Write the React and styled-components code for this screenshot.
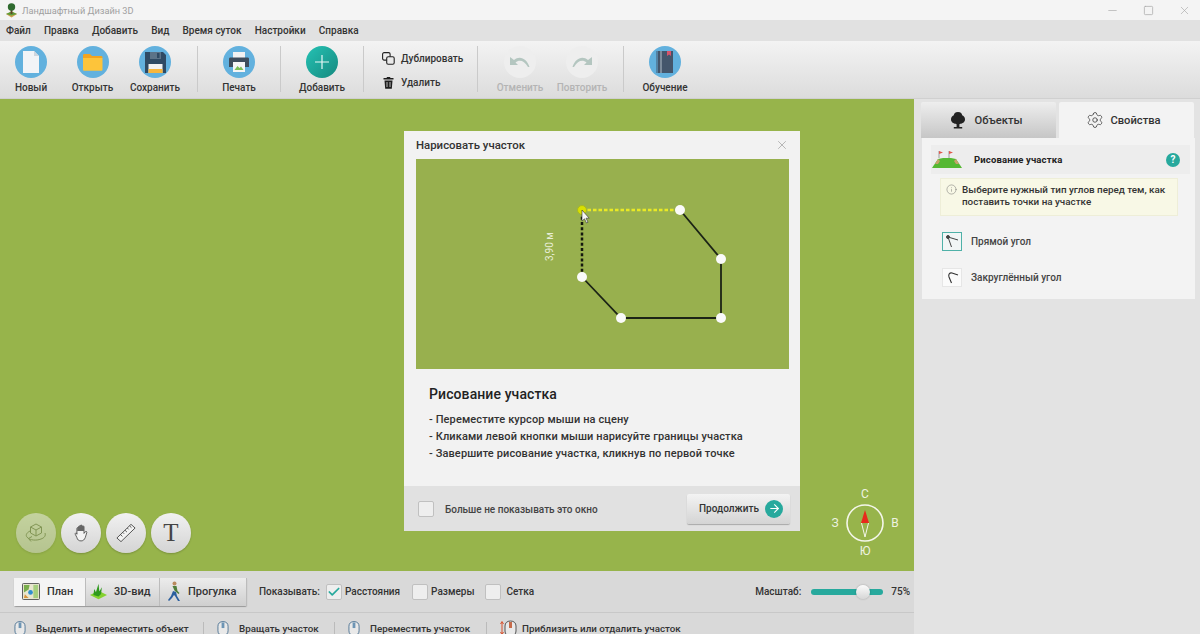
import styled, { createGlobalStyle } from "styled-components";
import { ArrowRight, Check, Info, Minus, Settings, Square, X } from "lucide-react";

const GlobalStyle = createGlobalStyle`
  html, body {
    margin: 0;
    height: 100%;
    overflow: hidden;
    font-family: Roboto, "Liberation Sans", sans-serif;
    color: #2b2b2b;
  }
  * { box-sizing: border-box; }
`;

const Page = styled.div`
  display: flex;
  flex-direction: column;
  width: 1200px;
  height: 634px;
  overflow: hidden;
  background: #e3e3e3;
`;

// title bar + menu
const TitleBar = styled.div`
  flex: none;
  height: 20px;
  display: flex;
  align-items: center;
  padding-left: 5px;
  background: #f4f4f4;
`;
const AppName = styled.span`
  margin-left: 4px;
  font-size: 9.2px;
  color: #a0a0a0;
`;
const WindowButtons = styled.div`
  margin-left: auto;
  display: flex;
  align-items: center;
  gap: 24px;
  padding-right: 9px;
  color: #a8a8a8;
`;
const MenuBar = styled.div`
  flex: none;
  height: 21px;
  display: flex;
  align-items: center;
  gap: 13.2px;
  padding-left: 6px;
  background: #e1e1e1;
  font-size: 10px;
  font-weight: 500;
  color: #333;
`;

// toolbar
const Toolbar = styled.div`
  flex: none;
  height: 58px;
  display: flex;
  align-items: flex-start;
  background: linear-gradient(#f3f3f3, #dcdcdc);
  border-bottom: 1px solid #d0d0d0;
`;
const ToolItem = styled.div`
  flex: none;
  width: ${(p) => p.$w}px;
  margin-left: ${(p) => p.$ml || 0}px;
  height: 57px;
  padding-top: 5px;
  display: flex;
  flex-direction: column;
  align-items: center;
  gap: 3px;
  font-size: 10px;
  font-weight: 500;
  color: ${(p) => (p.$off ? "#b4b4b4" : "#333")};
`;
const ToolCircle = styled.div`
  width: 32px;
  height: 32px;
  border-radius: 50%;
  display: flex;
  align-items: center;
  justify-content: center;
  background: ${(p) => p.$bg || "#62b1de"};
`;
const ToolLabel = styled.div`
  line-height: 14px;
`;
const ToolSep = styled.div`
  flex: none;
  width: 1px;
  height: 46px;
  margin: 5px 0 0 ${(p) => p.$ml || 0}px;
  background: #cacaca;
`;
const ToolStack = styled.div`
  flex: none;
  width: 113px;
  padding: 8px 0 0 18px;
  display: flex;
  flex-direction: column;
  gap: 6px;
`;
const StackRow = styled.div`
  display: flex;
  align-items: center;
  gap: 6px;
  height: 18px;
  font-size: 10px;
  font-weight: 500;
  color: #333;
`;

// main area
const Main = styled.div`
  flex: 1;
  min-height: 0;
  display: flex;
`;
const Workspace = styled.div`
  flex: none;
  width: 914px;
  display: flex;
  flex-direction: column;
`;
const Canvas = styled.div`
  position: relative;
  flex: 1;
  background: #97b44b;
`;
const CanvasTools = styled.div`
  position: absolute;
  left: 16px;
  bottom: 18px;
  display: flex;
  gap: 5px;
`;
const RoundTool = styled.div`
  width: 40px;
  height: 40px;
  border-radius: 50%;
  display: flex;
  align-items: center;
  justify-content: center;
  font: 25px "Liberation Serif", serif;
  color: #444;
  background: linear-gradient(#f1f1f1, #d4d4d4);
  box-shadow: 0 1px 2px rgba(0, 0, 0, 0.2);
  opacity: ${(p) => (p.$off ? 0.5 : 1)};
`;
const CompassSpot = styled.div`
  position: absolute;
  left: 825px;
  top: 386px;
`;

// dialog
const Dialog = styled.div`
  position: absolute;
  left: 404px;
  top: 32px;
  width: 396px;
  height: 400px;
  display: flex;
  flex-direction: column;
  background: #f2f2f2;
`;
const DialogHead = styled.div`
  flex: none;
  height: 28px;
  display: flex;
  align-items: center;
  justify-content: space-between;
  padding: 0 11px 0 12px;
  font-size: 11.4px;
  font-weight: 500;
  color: #333;
`;
const Preview = styled.div`
  flex: none;
  height: 210px;
  margin: 0 11px 0 12px;
  background: #98b04e;
`;
const DialogBody = styled.div`
  flex: 1;
  padding: 17px 25px 0;
`;
const DialogTitle = styled.div`
  font-size: 14px;
  font-weight: 500;
  line-height: 17px;
  letter-spacing: 0.1px;
  color: #222;
  margin-bottom: 8px;
`;
const DialogLine = styled.div`
  font-size: 11px;
  font-weight: 500;
  line-height: 17.2px;
  letter-spacing: 0.11px;
  color: #333;
`;
const DialogFoot = styled.div`
  flex: none;
  height: 45px;
  display: flex;
  align-items: center;
  padding: 0 10px 0 14px;
  background: #e1e1e1;
`;
const FootText = styled.span`
  margin: 1px 0 0 11px;
  font-size: 10px;
  font-weight: 500;
  color: #444;
`;
const ContinueButton = styled.div`
  margin-left: auto;
  width: 103px;
  height: 30px;
  display: flex;
  align-items: center;
  justify-content: space-between;
  padding: 0 7px 0 12px;
  border-radius: 2px;
  background: linear-gradient(#f3f3f3, #d4d4d4);
  box-shadow: 0 1px 1px rgba(0, 0, 0, 0.25);
  font-size: 10px;
  font-weight: 500;
  color: #333;
`;
const TealDot = styled.div`
  width: ${(p) => p.$size}px;
  height: ${(p) => p.$size}px;
  border-radius: 50%;
  display: flex;
  align-items: center;
  justify-content: center;
  background: #27a99d;
  color: #fff;
  font-size: 10px;
  font-weight: 700;
`;
const CheckBox = styled.div`
  flex: none;
  width: 16px;
  height: 16px;
  border: 1px solid #c0c0c0;
  border-radius: 2px;
  background: #eeeeee;
  display: flex;
  align-items: center;
  justify-content: center;
`;

// bottom bars
const ViewBar = styled.div`
  flex: none;
  height: 42px;
  display: flex;
  align-items: center;
  padding-left: 14px;
  background: #d9d9d9;
  border-bottom: 1px solid #c8c8c8;
  font-size: 10px;
  font-weight: 500;
  color: #333;
`;
const Segments = styled.div`
  display: flex;
  height: 28px;
  border-radius: 2px;
  box-shadow: 0 1px 1px rgba(0, 0, 0, 0.3);
`;
const Segment = styled.div`
  width: ${(p) => p.$w}px;
  display: flex;
  align-items: center;
  gap: 7px;
  padding-left: ${(p) => p.$pl}px;
  font-size: 11px;
  background: ${(p) => (p.$on ? "#f4f4f4" : "linear-gradient(#ececec, #cfcfcf)")};
  border-right: 1px solid #bcbcbc;
`;
const ShowLabel = styled.span`
  margin: 0 6px 0 12px;
`;
const CheckLabel = styled.span`
  margin: 0 ${(p) => p.$mr}px 0 ${(p) => p.$ml}px;
`;
const ScaleLabel = styled.span`
  margin-left: ${(p) => p.$ml}px;
`;
const SliderTrack = styled.div`
  position: relative;
  width: 72px;
  height: 6px;
  margin: 0 8px 0 10px;
  border-radius: 3px;
  background: #27a99d;
`;
const SliderThumb = styled.div`
  position: absolute;
  left: 45px;
  top: -4px;
  width: 14px;
  height: 14px;
  border-radius: 50%;
  background: linear-gradient(#fbfbfb, #d6d6d6);
  box-shadow: 0 0 2px rgba(0, 0, 0, 0.3);
`;
const StatusBar = styled.div`
  flex: none;
  height: 21px;
  display: flex;
  align-items: flex-start;
  padding: 7px 0 0 14px;
  background: #d9d9d9;
  font-size: 9.8px;
  font-weight: 500;
  color: #333;
  overflow: hidden;
`;
const StatusItem = styled.div`
  flex: none;
  width: ${(p) => p.$w}px;
  display: flex;
  align-items: center;
  gap: ${(p) => p.$gap || 10}px;
  white-space: nowrap;
`;
const StatusSep = styled.div`
  flex: none;
  width: 1px;
  height: 13px;
  margin: 2px 13px 0 0;
  background: #bbb;
`;

// right panel
const Side = styled.div`
  flex: 1;
  padding: 3px 5px 0 7px;
  background: #e3e3e3;
`;
const Tabs = styled.div`
  display: flex;
  gap: 3px;
  height: 36px;
`;
const Tab = styled.div`
  width: 135px;
  display: flex;
  align-items: center;
  justify-content: center;
  gap: ${(p) => (p.$on ? 6 : 10)}px;
  padding-right: ${(p) => (p.$on ? 6 : 4)}px;
  border-radius: 2px 2px 0 0;
  font-size: 11.2px;
  font-weight: 500;
  color: #333;
  background: ${(p) => (p.$on ? "#f3f3f3" : "linear-gradient(#eeeeee, #c6c6c6)")};
`;
const Panel = styled.div`
  height: 161px;
  margin-left: 1px;
  padding: 7px 5px 0 9px;
  background: #f3f3f3;
`;
const PanelHead = styled.div`
  height: 29px;
  display: flex;
  align-items: center;
  justify-content: space-between;
  padding-right: 10px;
  background: #ededed;
  font-size: 9.5px;
  font-weight: 700;
  letter-spacing: 0.15px;
  color: #222;
`;
const HeadLeft = styled.div`
  display: flex;
  align-items: center;
  gap: 11px;
`;
const Notice = styled.div`
  display: flex;
  gap: 5px;
  width: 238px;
  height: 38px;
  margin: 4px 0 15px 9px;
  padding: 5px;
  background: #f8f8e6;
  border: 1px solid #eeeed8;
  font-size: 9.85px;
  font-weight: 500;
  line-height: 12.4px;
  white-space: nowrap;
  color: #333;
`;
const AngleRow = styled.div`
  display: flex;
  align-items: center;
  gap: 9px;
  height: 20px;
  margin: 0 0 16px 11px;
  font-size: 10px;
  font-weight: 500;
  color: #444;
`;
const AngleIcon = styled.div`
  width: 20px;
  height: 19px;
  display: flex;
  align-items: center;
  justify-content: center;
  background: ${(p) => (p.$on ? "#f2f6f6" : "#fbfbfb")};
  border: 1px solid ${(p) => (p.$on ? "#4fb1a8" : "#e6e6e6")};
`;

function TreeLogo() {
  return (
    <svg width="13" height="15" viewBox="0 0 13 15">
      <path d="M1 11 L6.500 8.500 L12 11 L6.500 14.500Z" fill="#c9a04d" />
      <path d="M1 11 L6.500 8.500 L12 11 L6.500 12.500Z" fill="#5a9b3a" />
      <rect x="5.600" y="5" width="1.800" height="6" fill="#5f4526" />
      <circle cx="6.500" cy="4" r="3.700" fill="#2f6a2f" />
    </svg>
  );
}

function DocIcon() {
  return (
    <svg width="20" height="24" viewBox="0 0 20 24">
      <path d="M2 1h11l5 5v17H2z" fill="#f2f4f7" />
      <path d="M13 1l5 5h-5z" fill="#cfd6de" />
    </svg>
  );
}

function FolderIcon() {
  return (
    <svg width="21" height="18" viewBox="0 0 21 18">
      <path d="M1 2.500C1 1.500 1.500 1 2.500 1H8l2 2h9c1 0 1.500.5 1.500 1.500V5H1z" fill="#f2a41f" />
      <path d="M1 5h19.500v11.500c0 .8-.5 1.300-1.300 1.300H2.300C1.500 17.800 1 17.300 1 16.500z" fill="#fdc43a" />
    </svg>
  );
}

function SaveIcon() {
  return (
    <svg width="23" height="23" viewBox="0 0 23 23">
      <path d="M1 1h18l3 3v18H1z" fill="#2f4a63" />
      <rect x="6" y="1" width="11" height="7" fill="#5c7387" />
      <rect x="13" y="2" width="2.500" height="5" fill="#2f4a63" />
      <rect x="4.500" y="13" width="14" height="9" fill="#f2f2f2" />
      <rect x="4.500" y="18" width="14" height="4" fill="#f7b63c" />
    </svg>
  );
}

function PrintIcon() {
  return (
    <svg width="22" height="22" viewBox="0 0 22 22">
      <rect x="5" y="1" width="12" height="6" fill="#f2f2f2" />
      <path d="M1 8c0-1 .5-1.500 1.500-1.500h17c1 0 1.500.5 1.500 1.500v8h-20z" fill="#3e4d5c" />
      <rect x="5" y="11" width="12" height="10" fill="#f5f5f5" />
      <path d="M6.500 19l3-4 2 2 1.500-1.500 2.500 3.500z" fill="#7cbd55" />
    </svg>
  );
}

function PlusIcon() {
  return (
    <svg width="16" height="16" viewBox="0 0 16 16">
      <path d="M8 1v14M1 8h14" stroke="#e6f7f5" strokeWidth="1.200" />
    </svg>
  );
}

function BookIcon() {
  return (
    <svg width="18" height="22" viewBox="0 0 18 22">
      <rect x="2" y="0" width="15" height="22" fill="#44566c" />
      <rect x="4.500" y="0" width="1" height="22" fill="#b6c2cc" />
      <rect x="0.500" y="0" width="1" height="22" fill="#44566c" />
      <path d="M11 0h4v5l-2-1.500L11 5z" fill="#d8546c" />
    </svg>
  );
}

function UndoIcon({ flip }) {
  return (
    <svg width="20" height="12" viewBox="0 0 20 12" style={flip ? { transform: "scaleX(-1)" } : undefined}>
      <path d="M0 1v8h8L5.500 6.500C9 3.500 14 4 18 11h1.500C17 3 10 -1 4 4z" fill="#b4c6c0" />
    </svg>
  );
}

function CopyIcon() {
  return (
    <svg width="13" height="13" viewBox="0 0 13 13" fill="none" stroke="#222" strokeWidth="1.100">
      <rect x="0.600" y="0.600" width="7.500" height="7.500" rx="1.500" />
      <rect x="4.700" y="4.700" width="7.500" height="7.500" rx="1.500" fill="#e9e9e9" />
    </svg>
  );
}

function TrashIcon() {
  return (
    <svg width="13" height="13" viewBox="0 0 13 13">
      <path d="M1.500 2h3l.5-1h3l.5 1h3v1.500h-10zM2.500 4.500h8l-.7 8.200H3.200z" fill="#1e1e1e" />
      <path d="M5 6v5M8 6v5" stroke="#e6e6e6" strokeWidth=".8" />
    </svg>
  );
}

function PlotDrawing() {
  return (
    <svg width="373" height="210" viewBox="0 0 373 210">
      <path d="M264 51 L305 100 V159 H205 L166 118" fill="none" stroke="#1c2416" strokeWidth="1.800" />
      <path d="M166 118 V51" fill="none" stroke="#14180e" strokeWidth="2.500" strokeDasharray="3 2.200" />
      <path d="M166 51 H264" fill="none" stroke="#e9e925" strokeWidth="2.500" strokeDasharray="3.500 2" />
      <text x="0" y="0" transform="translate(137 102) rotate(-90)" fontSize="10" fontFamily="Roboto, sans-serif" fill="#e8eed8">
        3,90 м
      </text>
      <circle cx="166" cy="51" r="4.500" fill="#d9e000" stroke="#a9b820" />
      <circle cx="264" cy="51" r="5" fill="#fafafa" />
      <circle cx="305" cy="100" r="5" fill="#fafafa" />
      <circle cx="305" cy="159" r="5" fill="#fafafa" />
      <circle cx="205" cy="159" r="5" fill="#fafafa" />
      <circle cx="166" cy="118" r="5" fill="#fafafa" />
      <path d="M166 51 V62 L168.500 59.800 L170.500 64 L172 63.300 L170 59.200 H173.200Z" fill="#f5f5f5" stroke="#333" strokeWidth=".6" />
    </svg>
  );
}

function CubeIcon() {
  return (
    <svg width="24" height="22" viewBox="0 0 24 22" fill="none" stroke="#6f7a60" strokeWidth="1">
      <path d="M12 2l5.500 3v6L12 14l-5.500-3V5zM6.500 5l5.500 3 5.500-3M12 8v6" />
      <path d="M6 9c-4 2-5 5-2 7 2 2 8 3 13 1 3-1 5-3 4-6M8 14.500l-3.500 2 2.500 3" />
    </svg>
  );
}

function HandIcon() {
  return (
    <svg width="15" height="18" viewBox="0 0 18 21">
      <path d="M3.500 12V5c0-1.300 2-1.300 2 0V3c0-1.300 2-1.300 2 0v-1c0-1.300 2.300-1.300 2.300 0v1c0-1.300 2.200-1.300 2.200 0v8l1.500-2c1-1 2.500 0 1.800 1.200L13.500 16c-1 2.500-2.500 4-5 4-3 0-4.500-1.500-5-4L1.500 12c-.6-1.300 1-2 1.800-1z" fill="#f3f3f3" stroke="#333" strokeWidth=".9" />
      <path d="M3.800 8V5c0-1.300 1.700-1.300 1.700 0V3c0-1.300 2-1.300 2 0V2c0-1.300 2.300-1.300 2.300 0v1c0-1.300 2.200-1.300 2.200 0v5z" fill="#666" />
    </svg>
  );
}

function RulerIcon() {
  return (
    <svg width="20" height="20" viewBox="0 0 22 22" fill="none" stroke="#333" strokeWidth=".9">
      <path d="M1 16.500L16.500 1.500l4.500 4L5.500 20.500z" fill="#f3f3f3" />
      <path d="M5 12.800l2 2M7.500 10.400l1.400 1.400M10 8l2 2M12.500 5.600l1.400 1.400M15 3.200l2 2" />
    </svg>
  );
}

function CompassDrawing() {
  const label = { fontSize: 12, fontFamily: "Roboto, sans-serif", fill: "#eef2e0", textAnchor: "middle" };
  return (
    <svg width="80" height="74" viewBox="0 0 80 74">
      <text x="40" y="13" style={label}>С</text>
      <text x="10" y="42" style={label}>З</text>
      <text x="70" y="42" style={label}>В</text>
      <text x="40" y="70" style={label}>Ю</text>
      <circle cx="40" cy="38" r="18" fill="none" stroke="#f4f6ea" strokeWidth="1.600" />
      <path d="M40 25 L36 38 H44Z" fill="#e8291c" />
      <path d="M36.500 38 L40 52 L43.500 38" fill="none" stroke="#f4f6ea" strokeWidth="1" />
    </svg>
  );
}

function PlanIcon() {
  return (
    <svg width="18" height="17" viewBox="0 0 19 18">
      <rect x="0.500" y="0.500" width="18" height="17" rx="1" fill="#e8e6cf" stroke="#555" />
      <path d="M2 2h6l-1 5-5 3z" fill="#7aae4c" />
      <path d="M12 2h5v14h-5z" fill="#a6cf7e" />
      <circle cx="9" cy="10" r="2.500" fill="#2f8fcf" />
      <path d="M3 12l4 4H2z" fill="#d8953c" />
    </svg>
  );
}

function GrassIcon() {
  return (
    <svg width="17" height="19" viewBox="0 0 20 20">
      <path d="M0 14l10-5 10 5-10 5z" fill="#85d12f" />
      <path d="M4 14L5 7l2 4 3-10 1 9 3-5-1 8-3 3z" fill="#2f9a1e" />
    </svg>
  );
}

function WalkerIcon() {
  return (
    <svg width="13" height="21" viewBox="0 0 13 21">
      <circle cx="6.500" cy="2.500" r="2" fill="#b98a5e" />
      <path d="M4.500 5h4l1 5 2 2-1 1-3-2.500-1-1z" fill="#4f7d3a" />
      <path d="M5 10l3 1 1 4 3 5h-2l-3-5-1-1-2 3-3 3-1-1 3-4z" fill="#2b5f9e" />
    </svg>
  );
}

function MouseIcon() {
  return (
    <svg width="12" height="17" viewBox="0 0 13 17">
      <path d="M1 6c0-3 2-5 5.500-5s5.500 2 5.500 5v5c0 3-2 5-5.500 5S1 14 1 11z" fill="#e9e9e9" stroke="#4d7394" />
      <rect x="5" y="2" width="3" height="6" fill="#6d95b5" />
    </svg>
  );
}

function ZoomMouseIcon() {
  return (
    <svg width="17" height="17" viewBox="0 0 17 17">
      <path d="M2 2v12M.5 4L2 1.500 3.500 4M.5 12L2 14.500 3.500 12" fill="none" stroke="#d8532f" />
      <path d="M5 6c0-3 2-5 5.500-5S16 3 16 6v5c0 3-2 5-5.500 5S5 14 5 11z" fill="#e9e9e9" stroke="#555" />
      <rect x="9" y="2" width="3" height="6" fill="#c76b4a" />
    </svg>
  );
}

function FlagsHill() {
  return (
    <svg width="32" height="20" viewBox="0 0 32 20">
      <path d="M1 18l6-9 5-1h8l5 1 6 9z" fill="#55b833" />
      <path d="M4 14l3-5 2 2-2 3zM28 14l-3-5-2 2 2 3z" fill="#c8a26b" />
      <path d="M8 8V1M18 8V1" stroke="#888" strokeWidth=".8" />
      <path d="M8 1l4 1.500L8 4zM18 1l4 1.500L18 4z" fill="#e2574c" />
    </svg>
  );
}

function TreeIcon() {
  return (
    <svg width="14" height="17" viewBox="0 0 15 18">
      <path d="M7.500 0c3 0 4.500 2 4.500 3.500 2 .8 3 2.500 3 4.500 0 3-3 4.500-5 4.500l-1 .5v3h3v1.500H3V16h3v-3l-1-.5c-2 0-5-1.500-5-4.500 0-2 1-3.700 3-4.500C3 2 4.500 0 7.500 0z" fill="#222" />
    </svg>
  );
}

function AngleSharp() {
  return (
    <svg width="15" height="13" viewBox="0 0 15 13" fill="none" stroke="#444" strokeWidth="1">
      <path d="M3 2 L6.500 12M3 2 L13 5" />
      <circle cx="3" cy="2" r="1.500" fill="#444" />
    </svg>
  );
}

function AngleRound() {
  return (
    <svg width="15" height="13" viewBox="0 0 15 13" fill="none" stroke="#333" strokeWidth="1.100">
      <path d="M6.500 12 L4 6 C3 3 5 1.500 7 2 L13 4" />
    </svg>
  );
}

export default function App() {
  return (
    <Page>
      <GlobalStyle />
      <TitleBar>
        <TreeLogo />
        <AppName>Ландшафтный Дизайн 3D</AppName>
        <WindowButtons>
          <Minus size={13} strokeWidth={1.2} />
          <Square size={11} strokeWidth={1.6} />
          <X size={13} strokeWidth={1.2} />
        </WindowButtons>
      </TitleBar>
      <MenuBar>
        {["Файл", "Правка", "Добавить", "Вид", "Время суток", "Настройки", "Справка"].map((m) => (
          <span key={m}>{m}</span>
        ))}
      </MenuBar>
      <Toolbar>
        <ToolItem $w={62}>
          <ToolCircle><DocIcon /></ToolCircle>
          <ToolLabel>Новый</ToolLabel>
        </ToolItem>
        <ToolItem $w={61}>
          <ToolCircle><FolderIcon /></ToolCircle>
          <ToolLabel>Открыть</ToolLabel>
        </ToolItem>
        <ToolItem $w={64}>
          <ToolCircle><SaveIcon /></ToolCircle>
          <ToolLabel>Сохранить</ToolLabel>
        </ToolItem>
        <ToolSep $ml={10} />
        <ToolItem $w={82}>
          <ToolCircle><PrintIcon /></ToolCircle>
          <ToolLabel>Печать</ToolLabel>
        </ToolItem>
        <ToolSep />
        <ToolItem $w={82}>
          <ToolCircle $bg="linear-gradient(135deg, #25c2b4, #15897f)"><PlusIcon /></ToolCircle>
          <ToolLabel>Добавить</ToolLabel>
        </ToolItem>
        <ToolSep />
        <ToolStack>
          <StackRow><CopyIcon />Дублировать</StackRow>
          <StackRow><TrashIcon />Удалить</StackRow>
        </ToolStack>
        <ToolSep />
        <ToolItem $w={62} $ml={11} $off>
          <ToolCircle $bg="#eeeeee"><UndoIcon /></ToolCircle>
          <ToolLabel>Отменить</ToolLabel>
        </ToolItem>
        <ToolItem $w={62} $off>
          <ToolCircle $bg="#eeeeee"><UndoIcon flip /></ToolCircle>
          <ToolLabel>Повторить</ToolLabel>
        </ToolItem>
        <ToolSep $ml={10} />
        <ToolItem $w={82}>
          <ToolCircle><BookIcon /></ToolCircle>
          <ToolLabel>Обучение</ToolLabel>
        </ToolItem>
      </Toolbar>
      <Main>
        <Workspace>
          <Canvas>
            <CanvasTools>
              <RoundTool $off><CubeIcon /></RoundTool>
              <RoundTool><HandIcon /></RoundTool>
              <RoundTool><RulerIcon /></RoundTool>
              <RoundTool>T</RoundTool>
            </CanvasTools>
            <CompassSpot><CompassDrawing /></CompassSpot>
            <Dialog>
              <DialogHead>
                Нарисовать участок
                <X size={14} strokeWidth={1} color="#8a8a8a" />
              </DialogHead>
              <Preview><PlotDrawing /></Preview>
              <DialogBody>
                <DialogTitle>Рисование участка</DialogTitle>
                <DialogLine>- Переместите курсор мыши на сцену</DialogLine>
                <DialogLine>- Кликами левой кнопки мыши нарисуйте границы участка</DialogLine>
                <DialogLine>- Завершите рисование участка, кликнув по первой точке</DialogLine>
              </DialogBody>
              <DialogFoot>
                <CheckBox />
                <FootText>Больше не показывать это окно</FootText>
                <ContinueButton>
                  Продолжить
                  <TealDot $size={18}><ArrowRight size={13} strokeWidth={2} /></TealDot>
                </ContinueButton>
              </DialogFoot>
            </Dialog>
          </Canvas>
          <ViewBar>
            <Segments>
              <Segment $w={72} $pl={8} $on><PlanIcon />План</Segment>
              <Segment $w={74} $pl={4}><GrassIcon />3D-вид</Segment>
              <Segment $w={87} $pl={8}><WalkerIcon />Прогулка</Segment>
            </Segments>
            <ShowLabel>Показывать:</ShowLabel>
            <CheckBox><Check size={16} strokeWidth={3} color="#27a99d" /></CheckBox>
            <CheckLabel $mr={12} $ml={3}>Расстояния</CheckLabel>
            <CheckBox />
            <CheckLabel $mr={11} $ml={3}>Размеры</CheckLabel>
            <CheckBox />
            <CheckLabel $mr={0} $ml={5}>Сетка</CheckLabel>
            <ScaleLabel $ml={221}>Масштаб:</ScaleLabel>
            <SliderTrack><SliderThumb /></SliderTrack>
            <span>75%</span>
          </ViewBar>
          <StatusBar>
            <StatusItem $w={189}><MouseIcon />Выделить и переместить объект</StatusItem>
            <StatusSep />
            <StatusItem $w={117}><MouseIcon />Вращать участок</StatusItem>
            <StatusSep />
            <StatusItem $w={138}><MouseIcon />Переместить участок</StatusItem>
            <StatusSep />
            <StatusItem $w={200} $gap={5}><ZoomMouseIcon />Приблизить или отдалить участок</StatusItem>
          </StatusBar>
        </Workspace>
        <Side>
          <Tabs>
            <Tab><TreeIcon />Объекты</Tab>
            <Tab $on><Settings size={18} strokeWidth={1} />Свойства</Tab>
          </Tabs>
          <Panel>
            <PanelHead>
              <HeadLeft><FlagsHill />Рисование участка</HeadLeft>
              <TealDot $size={14}>?</TealDot>
            </PanelHead>
            <Notice>
              <Info size={11} strokeWidth={1} color="#666" />
              <span>Выберите нужный тип углов перед тем, как<br />поставить точки на участке</span>
            </Notice>
            <AngleRow><AngleIcon $on><AngleSharp /></AngleIcon>Прямой угол</AngleRow>
            <AngleRow><AngleIcon><AngleRound /></AngleIcon>Закруглённый угол</AngleRow>
          </Panel>
        </Side>
      </Main>
    </Page>
  );
}
